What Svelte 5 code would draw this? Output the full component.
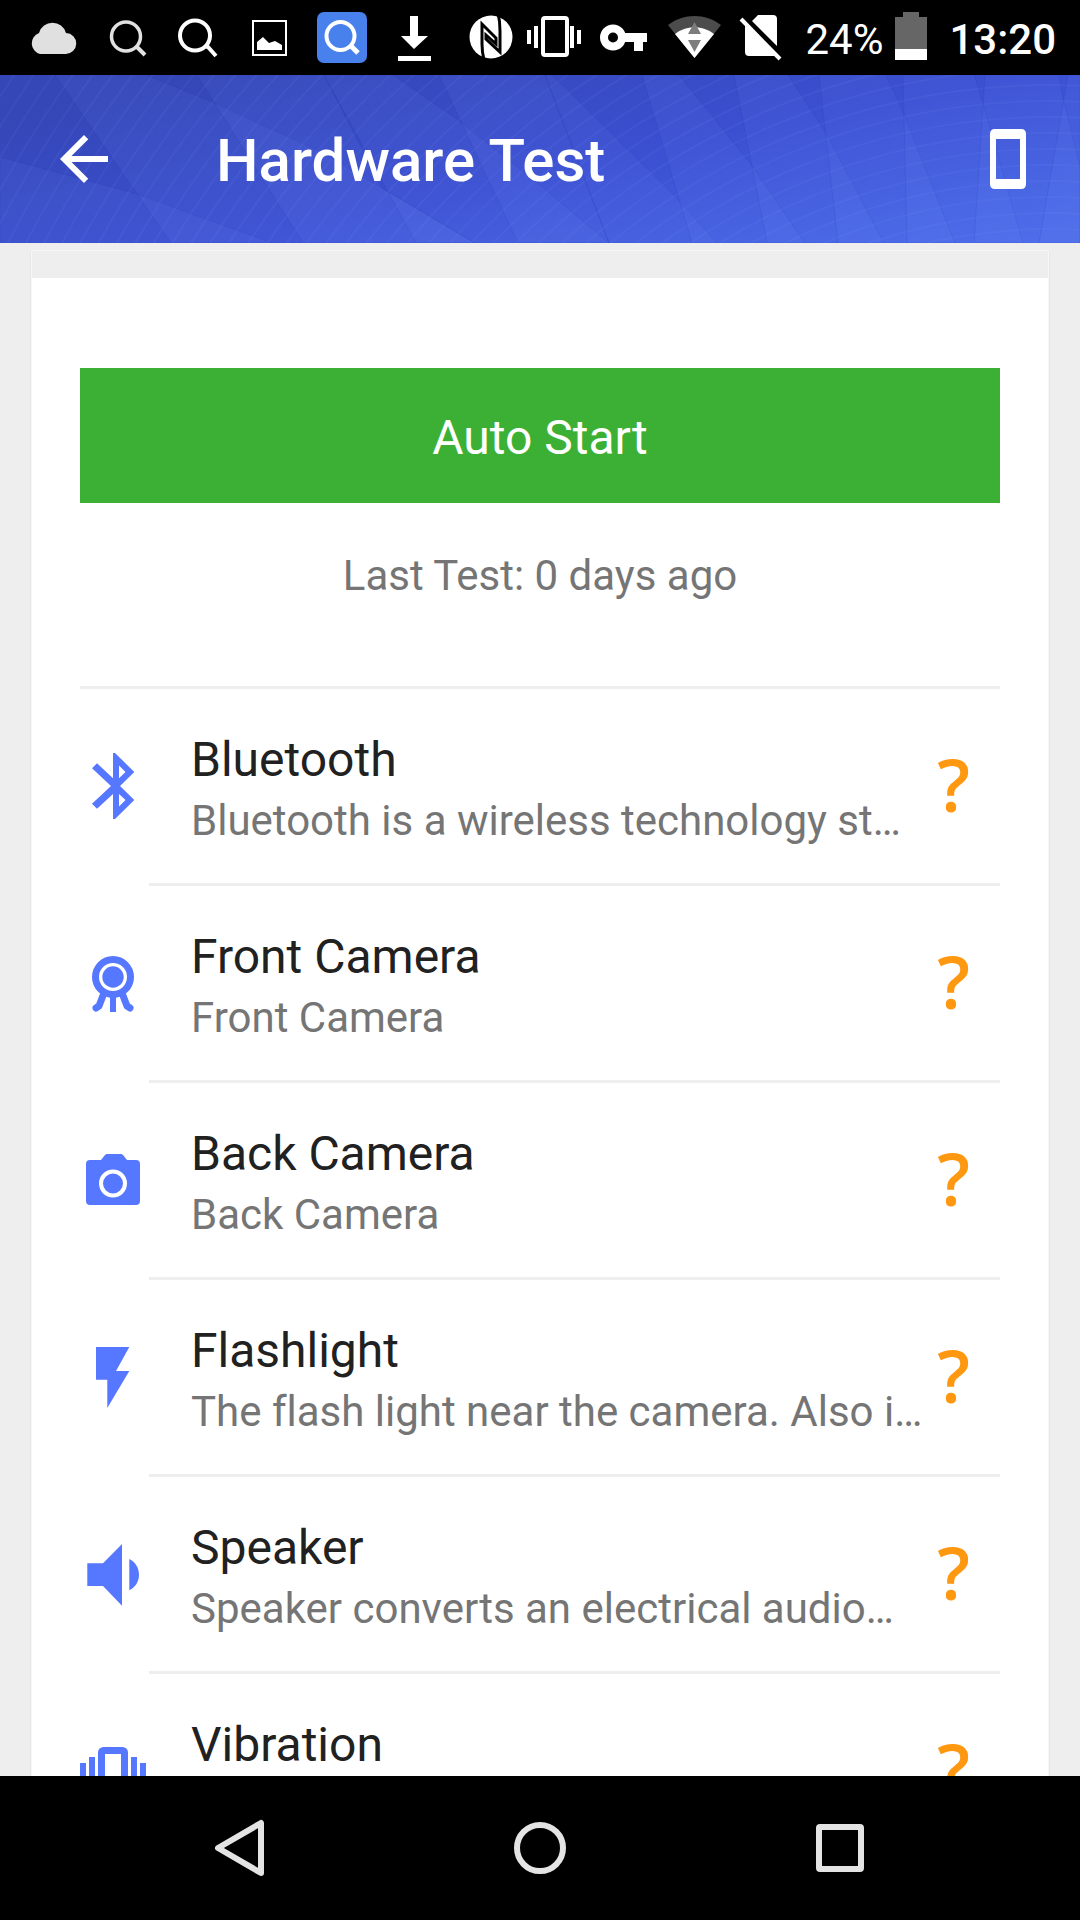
<script>
	//? variables
	const tests = [
		{ icon: "bluetooth", title: "Bluetooth", text: "Bluetooth is a wireless technology st…" },
		{ icon: "front", title: "Front Camera", text: "Front Camera" },
		{ icon: "back", title: "Back Camera", text: "Back Camera" },
		{ icon: "flash", title: "Flashlight", text: "The flash light near the camera. Also i…" },
		{ icon: "speaker", title: "Speaker", text: "Speaker converts an electrical audio…" },
		{ icon: "vibration", title: "Vibration", text: "Vibration" },
	];

	// header facets, from left to right
	const facets = [
		"0,82 134,118 272,168 0,168",
		"55,0 146,0 212,27 317,75 382,113 475,168 171,168",
		"197,0 324,0 382,113 475,168 303,168",
		"324,0 393,0 458,45 540,110 609,168 416,168",
		"439,0 545,0 609,168 518,168",
		"545,0 552,0 674,120 717,168 609,168",
		"642,0 679,0 750,88 805,168 692,168",
		"734,0 788,0 826,58 884,168 767,168",
		"819,0 886,0 903,37 955,168 838,168",
		"903,0 974,0 982,25 1023,168 907,168",
		"985,0 1059,0 1063,23 1080,92 1080,168 974,168",
		"1068,0 1080,0 1080,168 1039,168",
	];

	const rings = Array.from({ length: 50 }, (_, i) => 530 + i * 16);
</script>

<div class="screen">
	<div class="status">
		<div class="notifications">
			<svg class="note" viewBox="0 0 72 75">
				<path fill="#e0e0e0" d="M22 54a11 11 0 0 1-1-21 14 14 0 0 1 27 0 10.500 10.500 0 0 1-.500 21z" />
			</svg>
			<svg class="note" viewBox="0 0 72 75" fill="none" stroke="#e2e2e2">
				<circle cx="36" cy="36.500" r="14.500" stroke-width="3.500" />
				<path d="M46 47l2 1 7 7" stroke-width="4" />
			</svg>
			<svg class="note" viewBox="0 0 72 75" fill="none" stroke="#fff">
				<circle cx="33" cy="35.500" r="15" stroke-width="4" />
				<path d="M43 46l3 1 8 9" stroke-width="4" />
			</svg>
			<svg class="note" viewBox="0 0 72 75">
				<path d="M19 21h33v34H19z" fill="none" stroke="#fff" stroke-width="2" />
				<path d="M23 42l6-5 6 6 6-2 7 4v5H23z" fill="#fff" />
			</svg>
			<svg class="note" viewBox="0 0 72 75" fill="none" stroke="#fff">
				<rect x="11" y="12" width="50" height="51" rx="7" fill="#4880ec" stroke="none" />
				<circle cx="34.500" cy="36" r="14" stroke-width="4" />
				<path d="M45 46l7 7" stroke-width="5" />
			</svg>
			<svg class="note" viewBox="0 0 72 75" fill="#fff">
				<path d="M32 16h8v20h10L36 49 23 36h9zM20 56h33v5H20z" />
			</svg>
		</div>
		<div class="system">
			<svg width="48" height="75" viewBox="0 0 48 75">
				<circle cx="24" cy="37" r="21.500" fill="#fff" />
				<path
					d="M17 60q-2-8-2-16V24l14 14v6L19 35v4l14 13V31q0-10-2-18"
					fill="none"
					stroke="#000"
					stroke-width="3" />
			</svg>
			<svg width="54" height="75" viewBox="0 0 54 75" fill="#fff">
				<rect x="16" y="18" width="24" height="37" rx="2" fill="none" stroke="#fff" stroke-width="4" />
				<path d="M0 30h4v14H0zM7 26h4v22H7zM43 26h4v22h-4zM50 30h4v14h-4z" />
			</svg>
			<svg width="62" height="75" viewBox="0 0 62 75" fill="none" stroke="#fff">
				<circle cx="20" cy="37.500" r="9" stroke-width="8" />
				<path d="M30 37.500h24" stroke-width="9" />
				<path d="M45.500 38v13" stroke-width="9" />
			</svg>
			<svg width="56" height="75" viewBox="0 0 56 75">
				<path d="M1 25C17 13 38 13 54 25L27.500 58z" fill="#4c4c4c" />
				<path d="M8 34c11-9 28-9 39 0L27.500 58z" fill="#fff" />
				<path d="M21 34l6.500-12L34 34zM21 40h13l-6.500 12z" fill="#7d7d7d" />
			</svg>
			<svg width="54" height="75" viewBox="0 0 54 75">
				<path d="M17 21l6-6h15q4 0 4 4v27zM10 25l31 31H14q-4 0-4-4z" fill="#fff" />
				<path d="M6 19l39 40" stroke="#fff" stroke-width="4" />
			</svg>
			<span class="level">24%</span>
			<svg width="32" height="75" viewBox="0 0 32 75">
				<path d="M8 12h16v5h8v32H0V17h8z" fill="#666" />
				<path d="M0 49h32v11H0z" fill="#fff" />
			</svg>
			<span class="clock">13:20</span>
		</div>
	</div>

	<header class="toolbar">
		<svg class="facets" viewBox="0 0 1080 168" preserveAspectRatio="none">
			{#each facets as points}
				<polygon {points} fill="#7a9cff" fill-opacity="0.08" stroke="#24349c" stroke-opacity="0.12" />
			{/each}
			{#each rings as r}
				<circle cx="1050" cy="700" {r} fill="none" stroke="#8fa8ff" stroke-opacity="0.08" stroke-width="2" />
			{/each}
		</svg>
		<button class="icon-btn" aria-label="Back">
			<svg width="72" height="72" viewBox="0 0 24 24" fill="#fff">
				<path d="M20 11H7.830l5.590-5.590L12 4l-8 8 8 8 1.410-1.410L7.830 13H20v-2z" />
			</svg>
		</button>
		<h1>Hardware Test</h1>
		<button class="icon-btn" aria-label="Device">
			<svg width="72" height="72" viewBox="0 0 72 72">
				<path
					fill="#fff"
					fill-rule="evenodd"
					d="M23 6h26q5 0 5 5v50q0 5-5 5H23q-5 0-5-5V11q0-5 5-5zM24 16v40h24V16z" />
			</svg>
		</button>
	</header>

	<main>
		<div class="card">
			<div class="card-body">
				<button class="start">Auto Start</button>
				<p class="last">Last Test: 0 days ago</p>
				<ul>
					{#each tests as test}
						<li>
							<button class="row">
								<svg class="test-icon" viewBox="0 0 66 66">
									{#if test.icon == "bluetooth"}
										<path
											fill-rule="evenodd"
											d="M54.300 19L35 0h-2v25.200L17 10.300l-5 5L31 33 12 50.700l5 5L33 41v25h2l19.300-19L40 33zM39 12.500l6.500 6.500L39 25.200zM45.500 47L39 53.500V41z" />
									{:else if test.icon == "front"}
										<circle cx="33" cy="27" r="17.500" fill="none" stroke="#5677ff" stroke-width="7" />
										<circle cx="33" cy="27" r="10.700" />
										<path
											d="M24 43l-5 13-3 2M42 43l5 13 3 2"
											fill="none"
											stroke="#5677ff"
											stroke-width="7"
											stroke-linecap="round" />
										<path d="M30 44h6v18h-6z" />
									{:else if test.icon == "back"}
										<path d="M21 13l4-5q1-1 2-1h14q1 0 2 1l4 5h9q4 0 4 4v37q0 4-4 4H10q-4 0-4-4V17q0-4 4-4z" />
										<circle cx="33" cy="36.500" r="12" fill="none" stroke="#fff" stroke-width="4" />
									{:else if test.icon == "flash"}
										<path d="M16 3h33.300L36 27h13.300l-22 37V35.700H16z" />
									{:else if test.icon == "speaker"}
										<path d="M7.300 22.300H23L42 3v61.700L23 45H7.300zM49.300 18C55.500 21 59 27 59 33.700s-3.500 12.600-9.700 15.600z" />
									{:else}
										<path d="M0 25h6v16H0zM9 19h6v28H9zM51 19h6v28h-6zM60 25h6v16h-6z" />
										<rect x="21.500" y="12.500" width="23" height="41" rx="2" fill="none" stroke="#5677ff" stroke-width="7" />
									{/if}
								</svg>
								<span class="content">
									<span class="texts">
										<span class="title">{test.title}</span>
										<span class="description">{test.text}</span>
									</span>
									<span class="state">?</span>
								</span>
							</button>
						</li>
					{/each}
				</ul>
			</div>
		</div>
	</main>

	<nav>
		<button aria-label="Back">
			<svg width="60" height="60" viewBox="0 0 60 60">
				<path d="M51 5v50L8 30z" />
			</svg>
		</button>
		<button aria-label="Home">
			<svg width="60" height="60" viewBox="0 0 60 60">
				<circle cx="30" cy="30" r="23" />
			</svg>
		</button>
		<button aria-label="Recent apps">
			<svg width="60" height="60" viewBox="0 0 60 60">
				<rect x="9" y="9" width="42" height="42" rx="1" />
			</svg>
		</button>
	</nav>
</div>

<style>
	:global(body) {
		background-color: #eee;
	}

	.screen {
		display: flex;
		flex-direction: column;
		height: 100vh;
		overflow: hidden;
		font-family: Roboto, "Liberation Sans", sans-serif;
		font-variant-ligatures: none;
	}

	button {
		background: none;
		border: 0;
		color: inherit;
		cursor: pointer;
		font: inherit;
		font-variant-ligatures: none;
		margin: 0;
		padding: 0;
	}

	svg {
		display: block;
		flex-shrink: 0;
	}

	/* status bar */
	.status {
		background-color: #000;
		color: #fff;
		display: flex;
		flex-shrink: 0;
		height: 75px;
		justify-content: space-between;
		padding: 0 24px 0 18px;
	}
	.notifications,
	.system {
		display: flex;
		align-items: center;
	}
	.system {
		gap: 12px;
		font-size: 42px;
		line-height: 48px;
	}
	.system span {
		padding-top: 4px;
	}
	.note {
		width: 72px;
		height: 75px;
	}
	.level {
		margin-left: 4px;
	}
	.clock {
		font-weight: 500;
		margin-left: 10px;
	}

	/* toolbar */
	.toolbar {
		background: linear-gradient(168deg, #3546b6 10%, #3b50d2 55%, #4b6cea 100%);
		color: #fff;
		display: flex;
		align-items: center;
		flex-shrink: 0;
		height: 168px;
		padding: 0 36px 0 48px;
		position: relative;
	}
	.facets {
		position: absolute;
		top: 0;
		left: 0;
		width: 100%;
		height: 100%;
	}
	.icon-btn {
		position: relative;
	}
	.toolbar h1 {
		flex: 1;
		font-size: 60px;
		font-weight: 500;
		line-height: 72px;
		margin: 0 0 0 96px;
		padding-top: 4px;
		position: relative;
	}

	/* content */
	main {
		flex: 1;
		min-height: 0;
		overflow: hidden;
		padding: 7px 31px 0;
	}
	.card {
		border: 1px solid #f6f6f6;
		box-shadow: 0 1px 2px rgba(0, 0, 0, 0.08);
		padding-top: 27px;
	}
	.card-body {
		background-color: #fff;
		padding: 90px 48px 48px;
	}
	.start {
		background-color: #3cb034;
		color: #fff;
		display: block;
		font-size: 48px;
		height: 135px;
		line-height: 56px;
		padding-top: 4px;
		width: 100%;
	}
	.last {
		color: #757575;
		font-size: 42px;
		line-height: 48px;
		margin: 49px 0 86px;
		text-align: center;
	}
	ul {
		border-top: 3px solid #eee;
		list-style: none;
		margin: 0;
		padding: 0;
	}
	.row {
		display: flex;
		align-items: center;
		gap: 3px;
		text-align: left;
		width: 100%;
	}
	.test-icon {
		fill: #5677ff;
		width: 66px;
		height: 66px;
		margin-bottom: 4px;
	}
	.content {
		border-bottom: 3px solid #eee;
		display: flex;
		align-items: center;
		flex: 1;
		height: 194px;
		min-width: 0;
		padding: 0 30px 0 42px;
	}
	.texts {
		flex: 1;
		min-width: 0;
		padding-top: 10px;
	}
	.title,
	.description {
		display: block;
		overflow: hidden;
		text-overflow: ellipsis;
		white-space: nowrap;
	}
	.title {
		color: #212121;
		font-size: 48px;
		line-height: 60px;
	}
	.description {
		color: #757575;
		font-size: 42px;
		line-height: 62px;
	}
	.state {
		color: #ff9811;
		font-family: "Open Sans", sans-serif;
		font-size: 72px;
		font-weight: 600;
		line-height: 80px;
		padding-bottom: 4px;
		text-align: right;
		width: 40px;
	}

	/* navigation bar */
	nav {
		background-color: #000;
		display: grid;
		flex-shrink: 0;
		grid-template-columns: repeat(3, 1fr);
		height: 144px;
		padding: 0 90px;
	}
	nav button {
		display: flex;
		align-items: center;
		justify-content: center;
	}
	nav svg {
		fill: none;
		stroke: #e4e4e4;
		stroke-linejoin: round;
		stroke-width: 6px;
	}
</style>
